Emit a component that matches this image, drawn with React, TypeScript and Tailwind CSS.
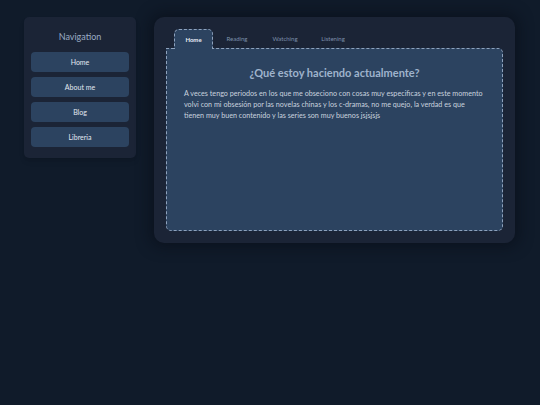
import React, { useState } from "react";

const navItems = ["Home", "About me", "Blog", "Libreria"];
const tabs = ["Home", "Reading", "Watching", "Listening"];

function App() {
  const [active, setActive] = useState("Home");

  return (
    <div
      className="min-h-screen w-full bg-[#101b2a] flex items-start gap-[18px] pl-[24px] pt-[17px]"
      style={{ fontFamily: "Lato, 'Open Sans', sans-serif" }}
    >
      {/* sidebar */}
      <aside className="w-[112px] h-[141px] bg-[#1b2436] rounded-[5px] px-[7px] pt-[15px] flex flex-col shadow-md">
        <h2 className="text-[9px] leading-[10px] text-center text-[#9aabc3] mb-[10px]">Navigation</h2>
        <div className="flex flex-col gap-[5px]">
          {navItems.map((item) => (
            <button
              key={item}
              className="h-[20px] w-full rounded-[4px] bg-[#2c4360] text-[7px] text-[#e3e9f1]"
            >
              {item}
            </button>
          ))}
        </div>
      </aside>

      {/* main panel */}
      <main className="w-[361px] h-[226px] bg-[#1b2436] rounded-[10px] px-[12px] pt-[12px] pb-[12px] flex flex-col shadow-[0_0_14px_4px_rgba(8,14,24,0.6)]">
        <div className="flex items-end h-[19px] pl-[8px]">
          {tabs.map((tab) =>
            tab === active ? (
              <button
                key={tab}
                onClick={() => setActive(tab)}
                className="w-[39px] h-[20px] -mb-px relative z-10 bg-[#2c4360] border border-dashed border-b-0 border-[#8ea2bd] rounded-t-[5px] text-[6px] font-bold text-[#e9eef5]"
              >
                {tab}
              </button>
            ) : (
              <button
                key={tab}
                onClick={() => setActive(tab)}
                className="w-[48px] h-[19px] text-[6px] text-[#7c90aa]"
              >
                {tab}
              </button>
            )
          )}
        </div>
        <section className="flex-1 bg-[#2c4360] border border-dashed border-[#8ea2bd] rounded-b-[5px] rounded-tr-[5px] px-[17px] pt-[17px]">
          <h1 className="text-[11px] leading-[14px] font-bold text-center text-[#9fb3cc] mb-[8px]">
            ¿Qué estoy haciendo actualmente?
          </h1>
          <p className="text-[7.2px] leading-[11px] text-[#c8d2df] whitespace-nowrap">
            A veces tengo periodos en los que me obseciono con cosas muy especificas y en este momento
            <br />
            volvi con mi obsesión por las novelas chinas y los c-dramas, no me quejo, la verdad es que
            <br />
            tienen muy buen contenido y las series son muy buenos jsjsjsjs
          </p>
        </section>
      </main>
    </div>
  );
}

export default App;
